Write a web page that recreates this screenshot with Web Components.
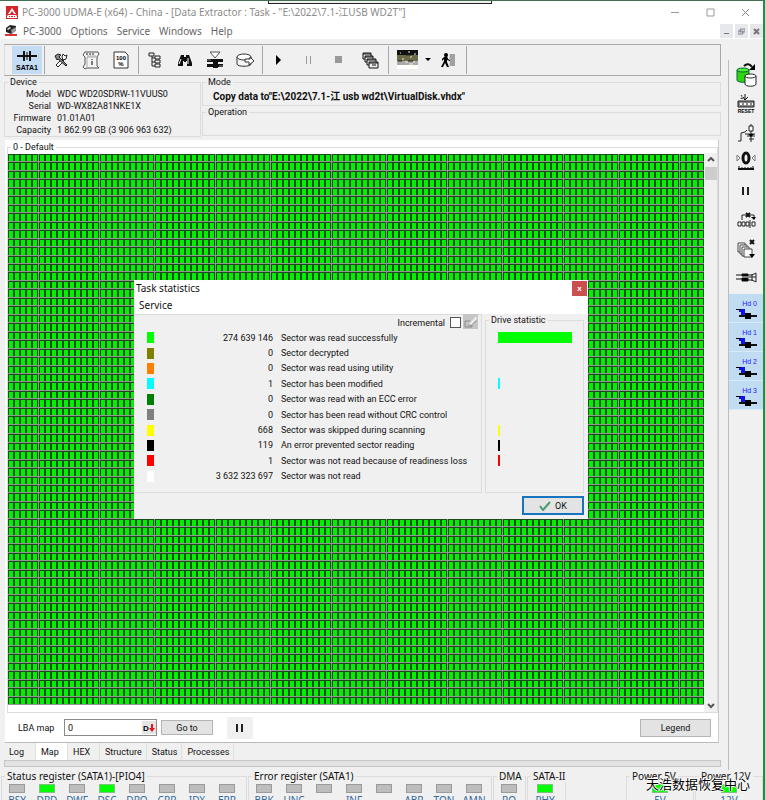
<!DOCTYPE html>
<html lang="en">
<head>
<meta charset="utf-8">
<title>PC-3000 UDMA-E</title>
<style>
html,body{margin:0;height:100%}
body{font:9px/12px Roboto,"Noto Sans CJK SC",sans-serif;color:#111;background:#f0f0f0;overflow:hidden}
</style>
</head>
<body>
<pc-app></pc-app>
<script>
const define=(name,css,html)=>{
  customElements.define(name,class extends HTMLElement{
    connectedCallback(){
      if(this.shadowRoot)return;
      const t=document.createElement('template');
      t.innerHTML=`<style>*{box-sizing:border-box}button,input{font:inherit;color:inherit;margin:0;padding:0;border:0;background:none}${css}</style>${typeof html==='function'?html(this):html}`;
      this.attachShadow({mode:'open'}).append(t.content.cloneNode(true));
    }
  });
};

/* ---------- icons: [width, height, drawing] ---------- */
const icons={
  logo:[12,13,'<path d="M0 0h12v13H0z" fill="#d8232a"/><path d="M6 2 2 8h8zM1 10l1-1h8l1 1v2H1z" fill="#fff"/><path d="M6 5 4 8h4zM3 10h1v1H3zm2 0h2v1H5zm3 0h1v1H8z" fill="#d8232a"/>'],
  mdi:[12,12,'<path d="M1 3 5 0l6 1v4L6 9 1 7z" fill="#222"/><path d="m6 5 5-3v4L7 9z" fill="#999"/><path d="m2 4 3-2 1 1-3 2z" fill="#eee"/><path d="M0 9h12v2H0z" fill="#d33"/>'],
  sata:[28,24,'<path d="M4 8h20M11 3v10M17 3v10" stroke="#111" stroke-width="2"/><path d="M14 4v8" stroke="#111"/><text x="14" y="22" text-anchor="middle" font-size="7" font-weight="700" font-family="Liberation Sans,sans-serif">SATA1</text>'],
  tools:[14,14,'<g fill="none" stroke="#222"><path d="m2 12 6-6 2 2-6 6z" fill="#fff"/><path d="m1 3 3-2 3 1-2 2 8 8-1 1-8-7-1 1z" fill="#888"/><path d="m8 4 1-3 2 2 2-1-1 4-3 1z" fill="#fff"/></g>'],
  scroll:[18,19,'<path d="M3 1h13l1 2-2 3v9l2 2H5l-2 1-2-2 2-3V6L1 4z" fill="#f4f4f4" stroke="#555"/><path d="M5 5h9M15 6H5v11" fill="none" stroke="#aaa"/><path d="M4 3h2m1 0h2m1 0h2" stroke="#222"/><path d="M9 8h2v1H9zm0 2h2v4H9z" fill="#777"/>'],
  doc:[16,18,'<path d="M1 1h11l3 3v13H1z" fill="#fff" stroke="#333"/><text x="8" y="9" text-anchor="middle" font-size="6" font-weight="700" font-family="Liberation Sans,sans-serif">100</text><text x="8" y="15" text-anchor="middle" font-size="6" font-weight="700" font-family="Liberation Sans,sans-serif">%</text>'],
  tree:[14,16,'<path d="M4 4v10h4M4 6h4M4 10h4" fill="none" stroke="#222"/><g fill="#eee" stroke="#222"><path d="M1 1h5v3H1z"/><path d="M7 4h5v3H7z"/><path d="M7 8h5v3H7z"/><path d="M7 12h5v3H7z"/></g>'],
  find:[14,13,'<path d="M3 1h3v2h2V1h3l3 8v3H9V7H8v1H6V7H5v5H0V9z" fill="#111"/><path d="m3 5-2 5M10 4v6" stroke="#fff"/>'],
  funnel:[18,18,'<path d="M4 1h10L9 7z" fill="#fff" stroke="#555"/><path d="M1 8h16v3H1zM1 13h16v3H1zM7 8h5v9H7z" fill="#111"/><path d="M1 9h4M13 15h4" stroke="#888"/>'],
  disk:[19,15,'<path d="M1 4v7c0 3 14 3 14 0V4" fill="#f6f6f6" stroke="#333"/><ellipse cx="8" cy="4" rx="7" ry="3" fill="#fff" stroke="#333"/><path d="M9 6h5v-2l4 4-5 4V9H9z" fill="#fff" stroke="#333"/>'],
  play:[8,10,'<path d="M1 0v10l5-5z"/>'],
  pause:[8,10,'<path d="M1 1h1v8H1zm4 0h1v8H5z" fill="#999"/>'],
  stop:[8,8,'<path d="M0 0h7v7H0z" fill="#999"/>'],
  windows:[17,17,'<g fill="#eee" stroke="#111"><path d="M1 1h8v6H1z"/><path d="M1 2h8"/><path d="M3 4h8v6H3z"/><path d="M3 5h8"/><path d="M5 7h9v6H5z"/><path d="M5 8h9"/><path d="M7 10h9v6H7z"/><path d="M7 11h9M10 13h4"/></g>'],
  photo:[21,20,'<path d="M0 0h21v7H0z" fill="#111"/><path d="M0 5h21v7H0z" fill="#6b6b48"/><path d="M0 11h21v4H0z" fill="#aaa"/><path d="M0 15h21v4H0z" fill="#fff"/><path d="M3 3h1M11 2h2M17 4h2M5 9h2M13 7h2M8 12h3M16 12h2M12 14h4M16 16h2" stroke="#eec"/><path d="M1 11h4M11 11h5M9 5h5" stroke="#222"/>'],
  drop:[6,4,'<path d="M0 0h6L3 3z"/>'],
  exit:[15,15,'<path d="M9 1h5v12H9z" fill="#888"/><path d="M9 1v12M11 1v12M13 1v12" stroke="#bbb"/><circle cx="5" cy="2" r="2"/><path d="m3 4 3-1 1 3 2 1v1L6 7v2l2 5H6l-2-4-2 4H0l3-6V6L1 8V6z"/>'],
  drives:[21,24,'<path d="M1 7v10c0 3 12 3 12 0V7" fill="#2fd413" stroke="#063"/><ellipse cx="7" cy="7" rx="6" ry="2" fill="#51ef32" stroke="#063"/><path d="M9 13v8c0 3 11 3 11 0v-8" fill="#fff" stroke="#222"/><ellipse cx="14.500" cy="13" rx="5.500" ry="2" fill="#fff" stroke="#222"/><path d="M8 3c3-3 6-2 8 1" fill="none" stroke="#111" stroke-width="2"/><path d="M19 1v6h-6z"/>'],
  reset:[18,21,'<text x="3" y="6" font-size="6" font-family="Liberation Sans,sans-serif">1</text><path d="M8 1v6M6 4l2 3 3-3" fill="none" stroke="#111"/><path d="M1 8h16v6H1z" fill="#888" stroke="#222"/><path d="M3 11h2m2 0h2m2 0h2m2 0h1" stroke="#fff" stroke-width="2"/><text x="9" y="20" text-anchor="middle" font-size="5" font-weight="700" font-family="Liberation Sans,sans-serif">RESET</text>'],
  circuit:[19,19,'<path d="M1 18h3V10l4-1 2-2M8 11h10M14 1v18M10 13h8M12 16h5" fill="none" stroke="#222"/><path d="M12 3h4v5h-4z" fill="#fff" stroke="#222"/><path d="m11 11 6 0-3 3z"/>'],
  gauge:[20,21,'<path d="m1 4 3 3-3 3zM19 4l-3 3 3 3z" fill="#fff" stroke="#777"/><ellipse cx="10" cy="7" rx="3" ry="5" fill="none" stroke="#111" stroke-width="3"/><path d="M2 18h16" stroke="#111" stroke-width="2"/><path d="M3 15v3M6 16v2M9 16v2M12 16v2M15 16v2M17 15v3" stroke="#111"/>'],
  bars:[8,10,'<path d="M0 1h2v8H0zm5 0h2v8H5z" fill="#222"/>'],
  chain:[19,16,'<path d="M5 8V3h12v4" fill="none" stroke="#222"/><path d="m9 1 4 4m0-4L9 5" stroke="#111" stroke-width="2"/><path d="m14 5 3 3 2-3z"/><path d="M1 10h3v4H1zM5 10h3v4H5zM9 10h3v4H9zM15 10h3v4h-3z" fill="#fff" stroke="#222"/><path d="M13 8v8" stroke="#222"/>'],
  pages:[19,20,'<g fill="#fff" stroke="#444"><path d="M1 4h7v9H1z"/><path d="M3 6h7v9H3z"/><path d="M5 8h7v9H5z"/><path d="M7 10h8v8H7z"/></g><path d="m13 1 4 4m0-4-4 4" stroke="#111" stroke-width="2"/><path d="M12 15h6l-3 4z"/>'],
  plug:[21,11,'<path d="M0 3h8M0 7h8M6 2h6v2H6zm0 4h6v3H6z" stroke="#111"/><path d="M12 3h4l4-2v9l-4-2h-4M12 5h8M16 2v7" fill="none" stroke="#222"/>'],
  hd:[23,17,'<path d="M4 5h6v6H6V8H4z" fill="#11e"/><path d="M1 5h5v1H1z" fill="#001"/><path d="M4 12h18" stroke="#111" stroke-width="2"/><path d="M10 9h6v6h-6z"/>'],
  eraser:[15,15,'<path d="M0 0h15v15H0z" fill="#c6c6c6"/><path d="M2 7h5M2 7v6h7v-2M5 12l8-9v4l-6 5" fill="none" stroke="#888"/><path d="m6 10 7-8 1 3-6 6z" fill="#eee"/>'],
  tick:[12,10,'<path d="m1 5 3 4 7-8" fill="none" stroke="#4b9a76" stroke-width="2"/>'],
  dgo:[12,10,'<text x="0" y="8" font-size="8" font-weight="700" font-family="Liberation Sans,sans-serif">D</text><path d="M8 1h2v4h2L9 9 6 5h2z" fill="#e11"/>'],
  up:[8,6,'<path d="m1 4 3-3 3 3" fill="none" stroke="#555" stroke-width="2"/>'],
  down:[8,6,'<path d="m1 1 3 3 3-3" fill="none" stroke="#555" stroke-width="2"/>'],
  min:[9,9,'<path d="M0 4h8v1H0z" fill="#999"/>'],
  max:[9,9,'<path d="M1 1h7v7H1z" fill="none" stroke="#999"/>'],
  close:[9,9,'<path d="m1 1 7 7m0-7-7 7" stroke="#888"/>'],
  mmin:[7,7,'<path d="M1 5h5v1H1z" fill="#778"/>'],
  mmax:[7,7,'<path d="M2 1h5v3H2zM0 3h5v3H0z" fill="#ddd" stroke="#889"/>'],
  mclose:[7,7,'<path d="m1 1 5 5m0-5-5 5" stroke="#777" stroke-width="2"/>']
};
define('pc-icon',':host{display:inline-flex;flex:none}svg{display:block}',el=>{
  const [w,h,d]=icons[el.getAttribute('name')];
  return `<svg width="${w}" height="${h}" viewBox="0 0 ${w} ${h}" aria-hidden="true">${d}</svg>`;
});

define('pc-group',`:host{display:block;min-width:0}
fieldset{height:100%;margin:0;min-width:0;border:1px solid #dcdcdc;padding:0}
legend{padding:0 2px;margin-left:3px;line-height:12px;white-space:nowrap}`,
el=>`<fieldset><legend>${el.getAttribute('legend')}</legend><slot></slot></fieldset>`);

define('pc-titlebar',`:host{display:flex;height:22px;align-items:center;background:#fff;color:#8c8c8c;font:10px/16px "Noto Sans","Noto Sans CJK SC",sans-serif;padding-left:6px}
span{margin-left:4px;flex:1;white-space:nowrap}
button{width:35px;height:22px;display:grid;place-items:center}`,
`<pc-icon name="logo"></pc-icon><span>PC-3000 UDMA-E (x64) - China - [Data Extractor : Task - "E:\\2022\\7.1-江USB WD2T"]</span>
<button aria-label="Minimize"><pc-icon name="min"></pc-icon></button><button aria-label="Maximize"><pc-icon name="max"></pc-icon></button><button aria-label="Close"><pc-icon name="close"></pc-icon></button>`);

define('pc-menubar',`:host{display:flex;height:16px;align-items:center;background:#fff;color:#666;font:10px/16px "Noto Sans",sans-serif;padding-left:5px}
nav{display:flex;gap:9px;margin-left:6px;flex:1}
.m{display:flex;gap:2px}.m button{width:13px;height:14px;background:#e6e8ec;display:grid;place-items:center}`,
`<pc-icon name="mdi"></pc-icon><nav><button>PC-3000</button><button>Options</button><button>Service</button><button>Windows</button><button>Help</button></nav>
<div class="m"><button aria-label="Minimize"><pc-icon name="mmin"></pc-icon></button><button aria-label="Restore"><pc-icon name="mmax"></pc-icon></button><button aria-label="Close"><pc-icon name="mclose"></pc-icon></button></div>`);

define('pc-toolbar',`:host{display:flex;height:32px;border:1px solid #a8a8a8;border-left-color:#ddd;padding:1px 6px 1px 7px;align-items:stretch}
button{width:30px;display:grid;place-items:center}
.on{background:#c3dcf3}.w{width:32px}.p{width:34px}.d{width:8px}
i{width:4px;flex:none;display:grid;justify-items:center}i::before{content:"";width:1px;background:#a6a6a6;height:100%}`,
()=>{const b=(n,l,c='')=>`<button class="${c}" aria-label="${l}"><pc-icon name="${n}"></pc-icon></button>`;
return b('sata','SATA1','on')+'<i></i>'+b('tools','Utility')+b('scroll','Script')+b('doc','Report')+'<i></i>'+b('tree','Tree')+b('find','Find')+b('funnel','Filter')+b('disk','Export')+'<i></i>'+b('play','Start')+b('pause','Pause')+b('stop','Stop')+b('windows','Windows','w')+'<i></i>'+b('photo','View','p')+b('drop','More','d')+b('exit','Exit','w')+'<i></i>';});

define('pc-info',`:host{display:grid;grid-template-columns:197px 1fr;gap:1px;height:61px}
.r{display:grid;grid-template-rows:30px 30px}
dl{margin:0;display:grid;grid-template-columns:46px 1fr;column-gap:6px;line-height:12px;white-space:nowrap}
dt{text-align:right}dd{margin:0}b{display:block;padding-left:10px;font:bold 10px/18px Roboto,"Noto Sans CJK SC",sans-serif;white-space:nowrap}`,
`<pc-group legend="Device"><dl><dt>Model</dt><dd>WDC WD20SDRW-11VUUS0</dd><dt>Serial</dt><dd>WD-WX82A81NKE1X</dd><dt>Firmware</dt><dd>01.01A01</dd><dt>Capacity</dt><dd>1 862.99 GB (3 906 963 632)</dd></dl></pc-group>
<div class="r"><pc-group legend="Mode"><b>Copy data to"E:\\2022\\7.1-江 usb wd2t\\VirtualDisk.vhdx"</b></pc-group><pc-group legend="Operation"></pc-group></div>`);

/* Grid of sectors: dark outlined cells, with a lighter seam under each row. */
define('sector-map',':host{display:block;min-width:0;min-height:0}svg{display:block;width:100%;height:100%}',
()=>{const C=114,R=65,W=696,H=550;let dark='',fill='';
for(let r=0;r<R;r++){const y=Math.round(r*H/R),h=Math.round((r+1)*H/R)-y;
for(let c=0;c<C;c++){const x=Math.round(c*W/C);dark+=`M${x} ${y}h6v${h-1}h-6z`;fill+=`M${x+1} ${y+1}h4v${h-2}h-4z`;}}
return `<svg viewBox="0 0 ${W} ${H}" preserveAspectRatio="none" shape-rendering="crispEdges" role="img" aria-label="Sector map"><path d="M0 0h${W}v${H}H0z" fill="#8f988f"/><path d="${dark}" fill="#1c4a1c"/><path d="${fill}" fill="#00f000"/></svg>`;});

define('map-scroll',`:host{display:flex;flex-direction:column;background:#f0f0f0;align-items:center;padding:4px 0 3px}
div{width:12px;height:13px;background:#cdcdcd;margin-top:4px}span{flex:1}`,
`<pc-icon name="up"></pc-icon><div></div><span></span><pc-icon name="down"></pc-icon>`);

define('map-panel',`:host{display:flex;flex-direction:column;background:#fff;border-right:1px solid #ccc;border-bottom:1px solid #bbb;min-height:0;padding:1px 0 0 2px}
pc-group{flex:1;min-height:0}
.g{display:grid;grid-template-columns:1fr 13px;height:100%}
sector-map{margin:1px 0 7px}
.c{display:flex;align-items:center;height:29px;padding:0 7px 0 11px}
label{width:46px}
.f{display:flex;width:93px;height:17px;border:1px solid #8a8a8a;align-items:center}
input{flex:1;min-width:0;padding-left:3px}
.f button{width:14px;height:13px;background:#e4e4e4;display:grid;place-items:center}
.b{background:#e3e3e3;border:1px solid #b5b5b5;height:15px;width:52px;margin-left:4px}
.p{width:26px;height:22px;background:#f0f0f0;margin:0 auto 0 14px;display:grid;place-items:center}
.l{width:71px;height:18px}`,
`<pc-group legend="0 - Default"><div class="g"><sector-map></sector-map><map-scroll></map-scroll></div></pc-group>
<div class="c"><label for="lba">LBA map</label><div class="f"><input id="lba" value="0"><button aria-label="Decimal"><pc-icon name="dgo"></pc-icon></button></div><button class="b">Go to</button><button class="p" aria-label="Pause"><pc-icon name="bars"></pc-icon></button><button class="b l">Legend</button></div>`);

define('pc-tabs',`:host{display:flex;height:17px}
button{height:17px;padding:0 4px 0 5px;min-width:32px;text-align:left;border-right:1px solid #e0e0e0}
.on{background:#fff}`,
`<button>Log</button><button class="on">Map</button><button>HEX</button><button>Structure</button><button>Status</button><button>Processes</button>`);

define('led-group',`:host{display:block;font:10px/12px "Noto Sans",sans-serif;min-width:0}
.r{display:flex;padding:2px 0 0 var(--in,0)}
div div{width:30px;display:flex;flex-direction:column;align-items:center}
i{width:16px;height:9px;background:#bdbdbd;border:1px solid #9b9b9b}
i.on{background:#0f0;border-color:#7fbf7f}
span{color:#33699c;line-height:14px;height:14px}`,
el=>`<pc-group legend="${el.getAttribute('legend')}"><div class="r">${el.getAttribute('leds').split(',').map(s=>`<div><i class="${s[0]==='*'?'on':''}"></i><span>${s.replace('*','')}</span></div>`).join('')}</div></pc-group>`);

define('status-bar',`:host{display:grid;grid-template-columns:246px 244px 33px 39px 1fr 68px 68px;gap:1px;height:31px;overflow:hidden;padding-left:1px;position:relative}
p{position:absolute;right:13px;bottom:8px;margin:0;font:13px/18px "Noto Sans CJK SC",sans-serif;color:#000;text-shadow:1px 0 #fff,-1px 0 #fff,0 1px #fff,0 -1px #fff;white-space:nowrap}
.pw{--in:18px}.s{--in:2px}`,
`<led-group legend="Status register (SATA1)-[PIO4]" leds="BSY,*DRD,DWF,*DSC,DRQ,CRR,IDX,ERR"></led-group>
<led-group legend="Error register (SATA1)" leds="BBK,UNC,,INF,,ABR,TON,AMN"></led-group>
<led-group legend="DMA" leds="RQ"></led-group><led-group class="s" legend="SATA-II" leds="*PHY"></led-group><span></span>
<led-group class="pw" legend="Power 5V" leds="*5V"></led-group><led-group class="pw" legend="Power 12V" leds="*12V"></led-group>
<p>天浩数据恢复中心</p>`);

define('side-bar',`:host{display:flex;flex-direction:column;border-left:1px solid #bcbcbc}
button{height:29px;display:grid;place-items:center;width:100%;flex:none}
.s{display:grid;padding-bottom:2px}
.h{background:#c0dcf3;border-bottom:1px solid #d8e9f7;align-content:start;font:7px/8px "Liberation Sans",sans-serif;color:#22f;padding-top:6px}
.h span{justify-self:end;padding-right:6px;white-space:nowrap}
.h pc-icon{margin-top:-4px}`,
()=>`<div class="s">${[['drives','Drives'],['reset','Reset'],['circuit','Power'],['gauge','Recalibrate'],['bars','Pause'],['chain','Chain'],['pages','Copies'],['plug','Connection']].map(([n,l])=>`<button aria-label="${l}"><pc-icon name="${n}"></pc-icon></button>`).join('')}</div>`+[0,1,2,3].map(n=>`<button class="h"><span>Hd ${n}</span><pc-icon name="hd"></pc-icon></button>`).join(''));

const stats=[['#0f0','274 639 146','Sector was read successfully',74],['#808000','0','Sector decrypted',0],['#ff8000','0','Sector was read using utility',0],['#0ff','1','Sector has been modified',2],['#008000','0','Sector was read with an ECC error',0],['#808080','0','Sector has been read without CRC control',0],['#ff0','668','Sector was skipped during scanning',2],['#000','119','An error prevented sector reading',2],['#f00','1','Sector was not read because of readiness loss',2],['#fff','3 632 323 697','Sector was not read',0]];
define('stats-dialog',`:host{display:block;width:454px;background:#f0f0f0}
header{display:flex;height:17px;background:#fff;font:10px/17px "Noto Sans",sans-serif;padding-left:2px;justify-content:space-between}
header button{width:15px;height:15px;margin:1px;background:#c9504f;color:#fff;font:bold 8px/12px "Liberation Sans",sans-serif}
nav{background:#fff;height:17px;padding-left:5px;font:10px/17px "Noto Sans",sans-serif}
main{display:grid;grid-template-columns:348px 99px;gap:3px;height:179px}
.a{border:1px solid #dcdcdc;border-left:0}
.i{display:flex;justify-content:flex-end;align-items:center;height:15px;padding-right:3px}
.i input{appearance:none;width:11px;height:11px;border:1px solid #555;background:#fff;margin:0 2px 0 5px}
table{border-collapse:collapse;height:154px;margin-left:13px}
td{padding:0;white-space:nowrap}
td i,.b i{display:block;height:11px}td i{width:7px}
.n{width:127px;text-align:right;padding-right:8px}td:first-child{width:7px}
.b{display:grid;grid-auto-rows:1fr;height:154px;align-items:center;padding-left:12px;margin-top:4px}
footer{display:flex;justify-content:flex-end;padding:3px 4px 4px 0}
footer button{width:62px;height:19px;border:2px solid #1874bf;background:#e3e3e3;display:flex;align-items:center;justify-content:center;gap:4px}
pc-group{display:block}`,
`<header><span>Task statistics</span><button aria-label="Close">x</button></header><nav><button>Service</button></nav>
<main><section class="a"><div class="i"><label for="inc">Incremental</label><input type="checkbox" id="inc"><button aria-label="Clear"><pc-icon name="eraser"></pc-icon></button></div>
<table>${stats.map(s=>`<tr><td><i style="background:${s[0]}"></i></td><td class="n">${s[1]}</td><td>${s[2]}</td></tr>`).join('')}</table></section>
<pc-group legend="Drive statistic"><div class="b">${stats.map(s=>`<i style="background:${s[0]};width:${s[3]}px"></i>`).join('')}</div></pc-group></main>
<footer><button><pc-icon name="tick"></pc-icon>OK</button></footer>`);

define('pc-app',`:host{display:flex;flex-direction:column;height:100vh;border-top:1px solid #3f7052;border-right:2px solid #2a8a45;position:relative;overflow:hidden}
.w{flex:1;min-height:0;display:grid;grid-template-columns:1fr 35px;gap:7px}
.m{display:flex;flex-direction:column;min-width:0;min-height:0;padding:5px 0 0 4px}
map-panel{flex:1;margin:3px 2px 0 1px}
.bar{height:7px;background:#e2e2e2;border:1px solid #c6c6c6;margin-bottom:3px;flex:none}
side-bar{margin-top:21px}
.tab{position:absolute;left:268px;top:-1px;width:224px;height:4px;background:#eee;border:1px solid #222;border-top:0}
stats-dialog{position:absolute;left:134px;top:279px}`,
`<pc-titlebar></pc-titlebar><pc-menubar></pc-menubar>
<div class="w"><div class="m"><pc-toolbar></pc-toolbar><pc-info></pc-info><map-panel></map-panel><pc-tabs></pc-tabs><div class="bar"></div></div><side-bar></side-bar></div>
<status-bar></status-bar><div class="tab"></div><stats-dialog role="dialog" aria-label="Task statistics"></stats-dialog>`);
</script>
</body>
</html>
